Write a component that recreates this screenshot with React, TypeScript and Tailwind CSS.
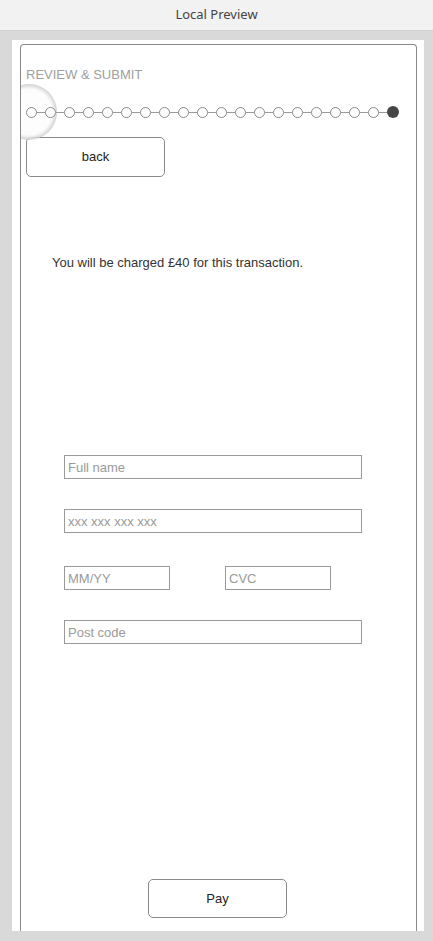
const STEPS = Array.from({ length: 20 }, (_, i) => i)

const FIELD =
  'h-[24px] border border-[#9a9a9a] bg-white px-[3px] text-[13px] text-[#333] placeholder:text-[#9a9a9a] outline-none'

export default function App() {
  return (
    <div
      className="flex h-[941px] w-[433px] flex-col bg-[#d9d9d9]"
      style={{ fontFamily: '"Liberation Sans", Arial, sans-serif' }}
    >
      <div
        className="flex h-[31px] shrink-0 items-center justify-center border-b border-[#d0d0d0] bg-[#f2f2f2] text-[13px] text-[#444]"
        style={{ fontFamily: '"Noto Sans", sans-serif' }}
      >
        Local Preview
      </div>

      <div className="flex min-h-0 flex-1 pb-[10px] pl-[12px] pr-[9px] pt-[9px]">
        <div className="flex flex-1 bg-white pl-[8px] pr-[7px] pt-[4px]">
          <div className="relative flex flex-1 flex-col overflow-hidden rounded-t-[4px] border border-b-0 border-[#8a8a8a] pl-[5px] pr-[5px] pt-[22px]">
            <div className="text-[13px] leading-[15px] text-[#a0a0a0]">REVIEW &amp; SUBMIT</div>

            <div className="relative mt-[24px] flex h-[12px] items-center">
              <div
                className="pointer-events-none absolute left-[-25px] top-[-22px] h-[56px] w-[56px] rounded-full"
                style={{
                  background:
                    'radial-gradient(circle, rgba(255,255,255,1) 0%, rgba(252,252,252,0.97) 58%, rgba(185,185,185,0.7) 72%, rgba(210,210,210,0.3) 86%, rgba(230,230,230,0) 100%)',
                }}
              />
              {STEPS.map((i) => (
                <div key={i} className="relative flex items-center">
                  {i > 0 && <div className="h-px w-[8px] bg-[#9a9a9a]" />}
                  {i === STEPS.length - 1 ? (
                    <div className="h-[12px] w-[12px] rounded-full bg-[#464646]" />
                  ) : (
                    <div className="h-[11px] w-[11px] rounded-full border border-[#8a8a8a] bg-white" />
                  )}
                </div>
              ))}
            </div>

            <button className="mt-[19px] h-[40px] w-[139px] rounded-[5px] border border-[#8a8a8a] bg-white text-[13px] text-[#222]">
              back
            </button>

            <p className="ml-[26px] mt-[78px] text-[13px] leading-[16px] text-[#333]">
              You will be charged £40 for this transaction.
            </p>

            <div className="ml-[38px] mt-[184px] flex w-[298px] flex-col">
              <input className={FIELD} placeholder="Full name" />
              <input className={`${FIELD} mt-[30px]`} placeholder="xxx xxx xxx xxx" />
              <div className="mt-[33px] flex gap-[55px]">
                <input className={`${FIELD} w-[106px]`} placeholder="MM/YY" />
                <input className={`${FIELD} w-[106px]`} placeholder="CVC" />
              </div>
              <input className={`${FIELD} mt-[30px]`} placeholder="Post code" />
            </div>

            <div className="flex flex-1 items-end justify-start pb-[13px] pl-[122px]">
              <button className="h-[39px] w-[139px] rounded-[5px] border border-[#8a8a8a] bg-white text-[13px] text-[#222]">
                Pay
              </button>
            </div>
          </div>
        </div>
      </div>
    </div>
  )
}
